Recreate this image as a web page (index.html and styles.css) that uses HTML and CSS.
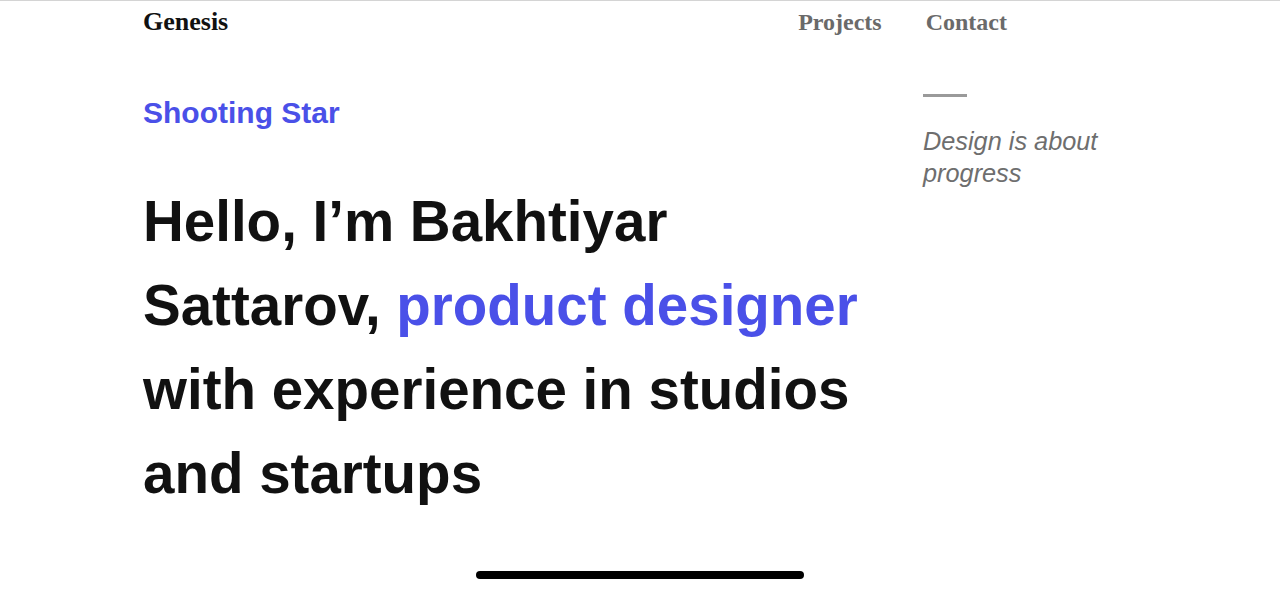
FILE: index.html
```html
<!DOCTYPE html>
<html lang="en">
<head>
<meta charset="utf-8">
<title>Genesis</title>
<link rel="stylesheet" href="styles.css">
</head>
<body>
<div class="page">
  <header class="header">
    <div class="logo">Genesis</div>
    <nav class="nav">
      <a class="nav-link" href="#">Projects</a>
      <a class="nav-link" href="#">Contact</a>
    </nav>
  </header>
  <main class="main">
    <section class="intro">
      <div class="tagline">Shooting Star</div>
      <h1 class="title">Hello, I’m Bakhtiyar<br>Sattarov, <span class="accent">product designer</span><br>with experience in studios<br>and startups</h1>
    </section>
    <aside class="aside">
      <div class="dash"></div>
      <p class="quote">Design is about progress</p>
    </aside>
  </main>
</div>
<div class="home-indicator"></div>
</body>
</html>
```

FILE: styles.css
```css
html, body {
  margin: 0;
  padding: 0;
  background: #ffffff;
}
body {
  border-top: 1px solid #d4d4d4;
  overflow: hidden;
  height: 590px;
}
.page {
  margin-left: 143px;
}
.header {
  width: 864px;
  display: flex;
  align-items: baseline;
  padding-top: 6px;
  line-height: 30px;
  font-family: "Liberation Serif", "Times New Roman", serif;
  font-weight: 700;
}
.logo {
  font-size: 26px;
  color: #111111;
}
.nav {
  margin-left: auto;
  display: flex;
  gap: 44px;
}
.nav-link {
  font-size: 24px;
  color: #6a6a6a;
  text-decoration: none;
}
.main {
  display: grid;
  grid-template-columns: 780px 220px;
  align-items: start;
  padding-top: 57px;
}
.tagline {
  margin-top: 2px;
  font-family: "Liberation Sans", Arial, sans-serif;
  font-weight: 700;
  font-size: 30px;
  line-height: 34px;
  color: #4a50e8;
}
.title {
  margin: 50px 0 0;
  font-family: "Liberation Sans", Arial, sans-serif;
  font-weight: 700;
  font-size: 56.5px;
  line-height: 84px;
  color: #111111;
}
.accent {
  color: #4a50e8;
}
.dash {
  width: 44px;
  height: 3px;
  background: #9a9a9a;
}
.quote {
  margin: 28px 0 0;
  width: 200px;
  font-family: "Liberation Sans", Arial, sans-serif;
  font-style: italic;
  font-size: 25.3px;
  line-height: 32px;
  color: #6e6e6e;
}
.home-indicator {
  position: fixed;
  left: 476px;
  top: 571px;
  width: 328px;
  height: 8px;
  border-radius: 4px;
  background: #000000;
}
```
